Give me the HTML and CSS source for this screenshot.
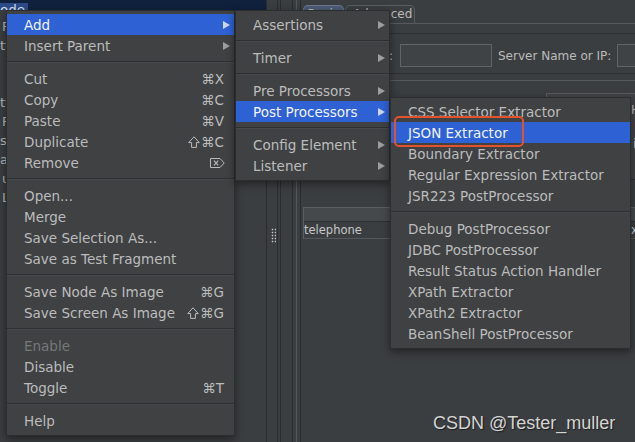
FILE: index.html
```html
<!DOCTYPE html>
<html>
<head>
<meta charset="utf-8">
<title>JMeter context menu</title>
<link rel="stylesheet" href="styles.css">
</head>
<body>
<div class="app">
  <div class="tree">
    <div class="tree-sel"><span class="tree-sel-label">ode</span></div>
    <div class="tree-rows">
      <div class="tree-row in">F</div>
      <div class="tree-row">tt</div>
      <div class="tree-row"></div>
      <div class="tree-row"></div>
      <div class="tree-row">tt</div>
      <div class="tree-row in">F</div>
      <div class="tree-row">ss</div>
      <div class="tree-row">ar</div>
      <div class="tree-row in">u</div>
      <div class="tree-row in">L</div>
    </div>
  </div>
  <div class="split"><div class="grip"></div><div class="split-lines"></div></div>
  <div class="content">
    <div class="panel">
      <div class="panel-in">
        <div class="tabs">
          <div class="tab tab-basic">Basic</div>
          <div class="tab tab-adv">Advanced</div>
        </div>
        <div class="rule rule-light"></div>
        <div class="rule rule-dark gap9"></div>
        <div class="fields">
          <span class="flabel flabel-proto">Protocol [http]:</span>
          <span class="field field-proto"></span>
          <span class="flabel">Server Name or IP:</span>
          <span class="field field-server"></span>
        </div>
        <div class="rule rule-dark gap6"></div>
        <div class="rule rule-light gap6"></div>
        <div class="box">
          <div class="box-title">HTTP Request</div>
          <div class="box-line">in</div>
        </div>
        <div class="table">
          <div class="thead"></div>
          <div class="trow"><span class="cell cell-name">telephone</span><span class="cell">xxx</span></div>
        </div>
      </div>
    </div>
  </div>

  <div class="watermark">CSDN @Tester_muller</div>

  <div class="menu menu-main">
    <div class="mi mi-sub active"><span>Add</span><span class="arrow"></span></div>
    <div class="mi mi-sub"><span>Insert Parent</span><span class="arrow"></span></div>
    <div class="sep"></div>
    <div class="mi"><span>Cut</span><span class="key">⌘X</span></div>
    <div class="mi"><span>Copy</span><span class="key">⌘C</span></div>
    <div class="mi"><span>Paste</span><span class="key">⌘V</span></div>
    <div class="mi"><span>Duplicate</span><span class="key"><svg class="shift" width="12" height="12" viewBox="0 0 12 12"><path d="M6 0.8L11.3 6.6H8.4V11.4H3.6V6.6H0.7Z" fill="none" stroke="#bcbcbc" stroke-width="1" stroke-linejoin="round"/></svg>⌘C</span></div>
    <div class="mi"><span>Remove</span><svg class="key-icon" width="15" height="10" viewBox="0 0 15 10"><path d="M0.5 0.5H10L14.2 5L10 9.5H0.5Z" fill="none" stroke="#bbbbbb" stroke-width="1"/><path d="M4 2.6L8.2 7.4M8.2 2.6L4 7.4" stroke="#bbbbbb" stroke-width="1.1"/></svg></div>
    <div class="sep"></div>
    <div class="mi"><span>Open...</span></div>
    <div class="mi"><span>Merge</span></div>
    <div class="mi"><span>Save Selection As...</span></div>
    <div class="mi"><span>Save as Test Fragment</span></div>
    <div class="sep"></div>
    <div class="mi"><span>Save Node As Image</span><span class="key">⌘G</span></div>
    <div class="mi"><span>Save Screen As Image</span><span class="key"><svg class="shift" width="12" height="12" viewBox="0 0 12 12"><path d="M6 0.8L11.3 6.6H8.4V11.4H3.6V6.6H0.7Z" fill="none" stroke="#bcbcbc" stroke-width="1" stroke-linejoin="round"/></svg>⌘G</span></div>
    <div class="sep"></div>
    <div class="mi disabled"><span>Enable</span></div>
    <div class="mi"><span>Disable</span></div>
    <div class="mi"><span>Toggle</span><span class="key">⌘T</span></div>
    <div class="sep"></div>
    <div class="mi"><span>Help</span></div>
  </div>

  <div class="menu menu-sub">
    <div class="mi mi-sub"><span>Assertions</span><span class="arrow"></span></div>
    <div class="sep"></div>
    <div class="mi mi-sub"><span>Timer</span><span class="arrow"></span></div>
    <div class="sep"></div>
    <div class="mi mi-sub"><span>Pre Processors</span><span class="arrow"></span></div>
    <div class="mi mi-sub active"><span>Post Processors</span><span class="arrow"></span></div>
    <div class="sep"></div>
    <div class="mi mi-sub"><span>Config Element</span><span class="arrow"></span></div>
    <div class="mi mi-sub"><span>Listener</span><span class="arrow"></span></div>
  </div>

  <div class="menu menu-post">
    <div class="mi"><span>CSS Selector Extractor</span></div>
    <div class="mi active"><span>JSON Extractor</span></div>
    <div class="mi"><span>Boundary Extractor</span></div>
    <div class="mi"><span>Regular Expression Extractor</span></div>
    <div class="mi"><span>JSR223 PostProcessor</span></div>
    <div class="sep"></div>
    <div class="mi"><span>Debug PostProcessor</span></div>
    <div class="mi"><span>JDBC PostProcessor</span></div>
    <div class="mi"><span>Result Status Action Handler</span></div>
    <div class="mi"><span>XPath Extractor</span></div>
    <div class="mi"><span>XPath2 Extractor</span></div>
    <div class="mi"><span>BeanShell PostProcessor</span></div>
  </div>

  <div class="callout"></div>
</div>
</body>
</html>
```
FILE: styles.css
```css
html, body {
  margin: 0;
  padding: 0;
  background: #3b3e40;
}

.app {
  position: relative;
  width: 635px;
  height: 442px;
  overflow: hidden;
  display: flex;
  background: #3b3e40;
  font-family: "DejaVu Sans", "Liberation Sans", sans-serif;
  color: #bbbbbb;
}

/* ---------- background: tree ---------- */
.tree {
  width: 266px;
  flex: none;
  border-right: 1px solid #2a2c2e;
}

.tree-sel {
  height: 10px;
  overflow: hidden;
  background: #10213d;
}

.tree-sel-label {
  display: inline-block;
  padding: 0 3px 0 0;
  background: #2c4b88;
  color: #d6def0;
  font-size: 13.5px;
  line-height: 14px;
}

.tree-rows {
  margin-top: 7px;
}

.tree-row {
  height: 19px;
  line-height: 19px;
  font-size: 13px;
  color: #b8b8b8;
  white-space: nowrap;
}

.tree-row.in {
  padding-left: 2px;
}

/* ---------- background: splitter ---------- */
.split {
  width: 25px;
  flex: none;
  display: flex;
}

.grip {
  width: 5px;
  height: 15px;
  margin: 228px 0 0 4px;
  background-image: radial-gradient(circle, #c4c4c4 0.7px, transparent 1.1px);
  background-size: 3px 3px;
}

.split-lines {
  width: 2px;
  margin-left: 1px;
  border-left: 1px solid #2a2c2e;
  border-right: 1px solid #2a2c2e;
}

/* ---------- background: content panel ---------- */
.content {
  flex: 1;
  border-left: 1px solid #2a2c2e;
  padding-left: 3px;
  display: flex;
}

.panel {
  flex: 1;
  border-left: 1px solid #54575a;
  padding-left: 3px;
  display: flex;
}

.panel-in {
  flex: 1;
  border-left: 1px solid #2a2c2e;
  min-width: 0;
}

.tabs {
  display: flex;
  gap: 1px;
  padding: 5px 0 0 2px;
  height: 18px;
}

.tab {
  height: 18px;
  box-sizing: border-box;
  border: 1px solid #5b5e61;
  border-bottom: none;
  border-radius: 5px 5px 0 0;
  font-size: 12px;
  line-height: 17px;
  color: #bbbbbb;
}

.tab-basic {
  width: 41px;
  text-align: center;
  background: #4b5b74;
  border-color: #6a7890;
}

.tab-adv {
  padding: 0 2px 0 7px;
}

.rule {
  height: 0;
}

.rule-light {
  border-top: 1px solid #57595c;
}

.rule-dark {
  border-top: 1px solid #2c2e30;
}

.gap9 {
  margin-top: 9px;
}

.gap6 {
  margin-top: 6px;
}

.fields {
  display: flex;
  align-items: center;
  height: 23px;
  margin-top: 10px;
  font-size: 12px;
  white-space: nowrap;
}

.flabel {
  margin-left: 6px;
}

.flabel-proto {
  width: 92px;
  flex: none;
  margin-left: 0;
  text-align: right;
  overflow: hidden;
}

.field {
  height: 23px;
  box-sizing: border-box;
  border: 1px solid #616467;
  background: #404345;
}

.field-proto {
  width: 92px;
  margin-left: 7px;
  flex: none;
}

.field-server {
  flex: 1;
  margin-left: 6px;
  min-width: 40px;
}

.box {
  margin: 12px 0 0 245px;
  height: 87px;
  box-sizing: border-box;
  border-top: 1px solid #57595c;
  border-left: 1px solid #57595c;
  border-bottom: 1px solid #2c2e30;
  background: #404345;
  font-size: 12px;
  white-space: nowrap;
}

.box-title {
  padding-left: 84px;
  margin-top: 9px;
  line-height: 14px;
}

.box-line {
  padding-left: 86px;
  margin-top: 20px;
  line-height: 14px;
}

.table {
  margin: 27px 0 0 2px;
  border-left: 1px solid #5b5e61;
}

.thead {
  height: 13px;
  border-top: 1px solid #5b5e61;
  border-bottom: 1px solid #2c2e30;
  background: #46494c;
}

.trow {
  display: flex;
  height: 16px;
  border-bottom: 1px solid #56595b;
  font-size: 11.5px;
  line-height: 16px;
  color: #c8c8c8;
  white-space: nowrap;
}

.cell-name {
  width: 327px;
  flex: none;
}

/* ---------- watermark ---------- */
.watermark {
  position: absolute;
  left: 433px;
  top: 414px;
  font-family: "Liberation Sans", Arial, sans-serif;
  font-size: 18px;
  line-height: 18px;
  color: #d4d4d4;
  text-shadow: 1px 1px 1px rgba(0, 0, 0, 0.55);
  white-space: nowrap;
}

/* ---------- popup menus ---------- */
.menu {
  position: absolute;
  box-sizing: border-box;
  padding: 3px 0 4px;
  background: #3f4143;
  border: 1px solid #2b2d2f;
  box-shadow: 0 3px 8px rgba(0, 0, 0, 0.45);
  font-size: 13.5px;
}

.menu-main {
  left: 6px;
  top: 10px;
  width: 229px;
}

.menu-sub {
  left: 235px;
  top: 10px;
  width: 155px;
}

.menu-post {
  left: 390px;
  top: 97px;
  width: 241px;
}

.mi {
  display: flex;
  align-items: center;
  justify-content: space-between;
  height: 21px;
  padding: 0 10px 0 17px;
  color: #bcbcbc;
  white-space: nowrap;
}

.mi-sub {
  padding-right: 4px;
}

.mi.active {
  background: #2e61d3;
  color: #f2f4fa;
}

.mi.disabled {
  color: #767879;
}

.arrow {
  width: 0;
  height: 0;
  border-left: 7px solid #9d9d9d;
  border-top: 4px solid transparent;
  border-bottom: 4px solid transparent;
}

.mi.active .arrow {
  border-left-color: #cdd6ea;
}

.key {
  display: flex;
  align-items: center;
  color: #bcbcbc;
}

.shift {
  display: block;
  margin-right: 1px;
}

.key-icon {
  display: block;
  margin-right: -1px;
}

.sep {
  height: 1px;
  background: #2d2f31;
  border-bottom: 1px solid #46494b;
  margin: 5px 0;
}

.callout {
  position: absolute;
  left: 394px;
  top: 116px;
  width: 130px;
  height: 31px;
  box-sizing: border-box;
  border: 2px solid #e2532d;
  border-radius: 5px;
}
```
